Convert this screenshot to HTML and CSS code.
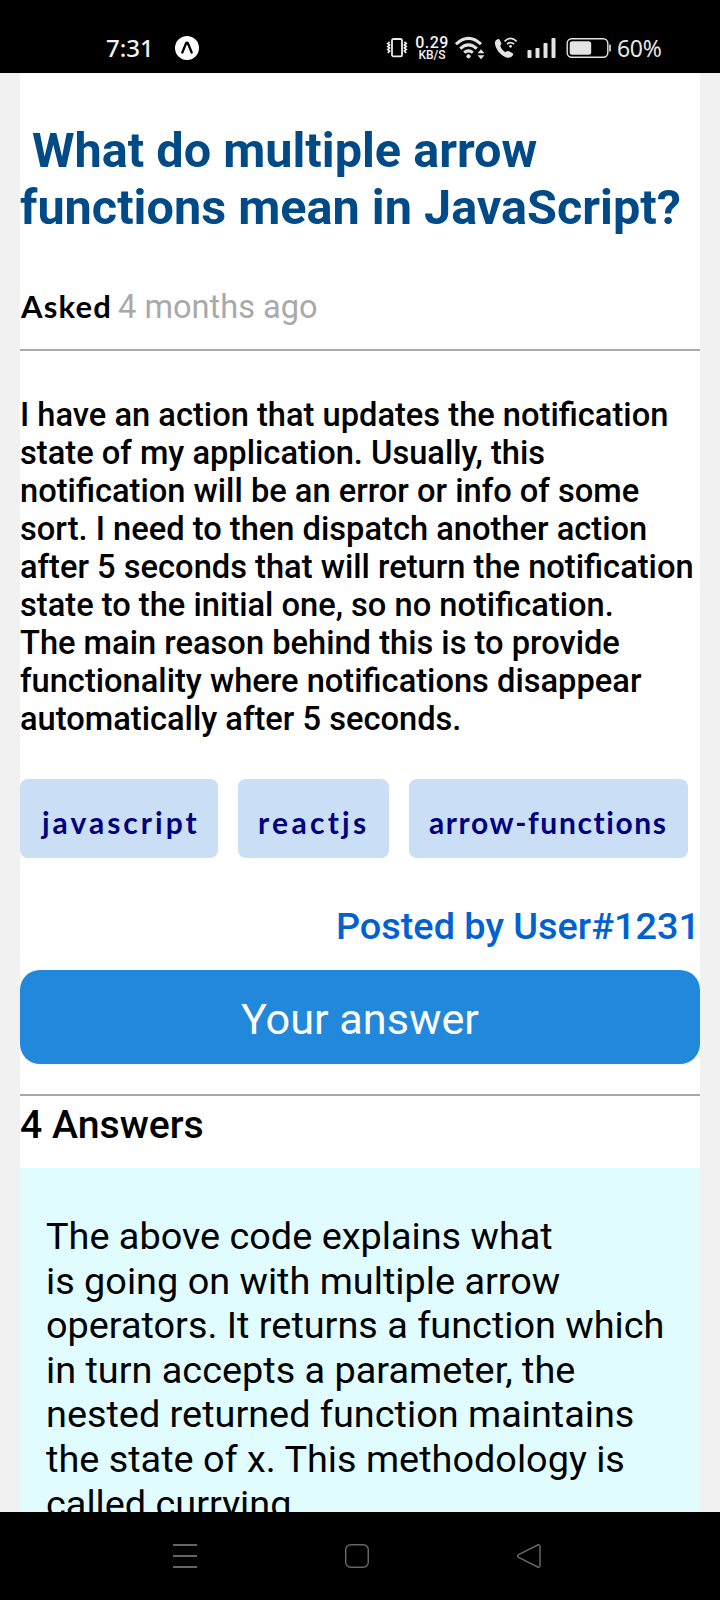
FILE: index.html
```html
<!DOCTYPE html>
<html lang="en">
<head>
<meta charset="utf-8">
<title>Question</title>
<link rel="stylesheet" href="styles.css">
</head>
<body>
<div class="screen">
  <header class="status">
    <div class="status-left">
      <span class="clock">7:31</span>
      <svg class="app-icon" width="24" height="24" viewBox="0 0 24 24"><circle cx="12" cy="12" r="12" fill="#fff"/><path d="M7.3 16.5 11 7.5Q12 6 13 7.5L16.7 16.5" fill="none" stroke="#000" stroke-width="2.3" stroke-linecap="round" stroke-linejoin="round"/></svg>
    </div>
    <div class="status-right">
      <svg class="vibrate" width="22" height="20" viewBox="0 0 22 20" fill="none" stroke="#eee"><rect x="6" y="1" width="10" height="17.400" rx="1.500" stroke-width="1.800"/><path d="M3.600 4 1.800 5.500 3.600 7 1.800 8.500 3.600 10 1.800 11.500 3.600 13 1.800 15M18.400 4 20.200 5.500 18.400 7 20.200 8.500 18.400 10 20.200 11.500 18.400 13 20.200 15" stroke-width="1.700"/></svg>
      <span class="net"><span class="net-rate">0.29</span><span class="net-unit">KB/S</span></span>
      <svg class="wifi" width="30" height="24" viewBox="0 0 30 24"><g fill="none" stroke="#e4e4e4" stroke-width="3.100"><path d="M1 8.200Q13.500-3.600 26 8.200"/><path d="M5.200 12.600Q13.500 5 21.800 12.600"/><path d="M9.200 16.600Q13.500 13 17.800 16.600"/></g><circle cx="13.500" cy="20.300" r="2.100" fill="#e4e4e4"/><path d="M22.500 17.300 26 13.300 29.500 17.300ZM22.500 19.300 29.500 19.300 26 23.300Z" fill="#e4e4e4"/></svg>
      <svg class="call" width="24" height="22" viewBox="0 0 24 22"><path d="M3.500 2.200Q5 1.500 5.800 3L7.300 6.300Q7.600 7.500 6.200 8.800Q7.500 13 11.600 15.200Q13 13.600 14.400 14L18.300 15.900Q19.800 16.800 18.700 18.400Q16.500 21.500 12.500 20.500Q7.500 18.900 4 14Q.5 8.500 1 5Q1.600 2.800 3.500 2.200Z" fill="#e4e4e4"/><g fill="none" stroke="#e4e4e4" stroke-width="1.700"><path d="M10.500 4.300Q16.500-1.400 22.700 4.300"/><path d="M13 7.200Q16.600 4 20.200 7.200"/></g><circle cx="16.600" cy="9.300" r="1.400" fill="#e4e4e4"/></svg>
      <svg class="bars" width="30" height="20" viewBox="0 0 30 20" fill="#e4e4e4"><rect x=".5" y="12" width="4" height="8" rx=".8"/><rect x="8.500" y="10" width="4" height="10" rx=".8"/><rect x="16.500" y="5" width="4" height="15" rx=".8"/><rect x="24.500" y="0" width="4" height="20" rx=".8"/></svg>
      <svg class="battery" width="46" height="20" viewBox="0 0 46 20"><rect x="1.200" y=".7" width="40.600" height="18.600" rx="4.500" fill="none" stroke="#e4e4e4" stroke-width="1.400"/><rect x="3.700" y="3.200" width="21.500" height="13.600" rx="2.500" fill="#e4e4e4"/><rect x="43" y="6.500" width="2" height="7" rx=".6" fill="#bbb"/></svg>
      <span class="percent">60%</span>
    </div>
  </header>

  <main class="page">
    <h1 class="title">&nbsp;What do multiple arrow<br>functions mean in JavaScript?</h1>
    <p class="asked"><span class="asked-label">Asked</span><span class="asked-time">4 months ago</span></p>
    <p class="body">I have an action that updates the notification<br>state of my application. Usually, this<br>notification will be an error or info of some<br>sort. I need to then dispatch another action<br>after 5 seconds that will return the notification<br>state to the initial one, so no notification.<br>The main reason behind this is to provide<br>functionality where notifications disappear<br>automatically after 5 seconds.</p>
    <div class="tags">
      <span class="tag tag-js">javascript</span>
      <span class="tag tag-react">reactjs</span>
      <span class="tag tag-arrow">arrow-functions</span>
    </div>
    <p class="author">Posted by User#1231</p>
    <button class="answer-button">Your answer</button>
    <h2 class="count">4 Answers</h2>
    <article class="answer">The above code explains what<br>is going on with multiple arrow<br>operators. It returns a function which<br>in turn accepts a parameter, the<br>nested returned function maintains<br>the state of x. This methodology is<br>called currying</article>
  </main>

  <nav class="nav">
    <svg width="26" height="26" viewBox="0 0 26 26" stroke="#666" stroke-width="1.800"><path d="M1 2H25M1 13H25M1 24H25"/></svg>
    <svg width="26" height="26" viewBox="0 0 26 26" fill="none" stroke="#666" stroke-width="1.500"><rect x="1.700" y="1.700" width="22.600" height="22.600" rx="5"/></svg>
    <svg width="26" height="26" viewBox="0 0 26 26" fill="none" stroke="#666" stroke-width="1.500"><path d="M2.600 11.700 21.700 2Q24 1.300 24 3.500V22.500Q24 24.700 21.700 24L2.600 14.300Q.6 13 2.600 11.700Z"/></svg>
  </nav>
</div>
</body>
</html>
```
FILE: styles.css
```css
* { box-sizing: border-box; margin: 0; padding: 0; }
body { background: #f1f1f1; font-family: Roboto, sans-serif; color: #000; }
.screen { width: 720px; height: 1600px; display: flex; flex-direction: column; overflow: hidden; }
svg { display: block; flex: none; }

.status { flex: none; height: 73px; background: #000; color: #f2f2f2; display: flex; justify-content: space-between; padding: 24px 58px 0 106px; font-family: "Noto Sans", sans-serif; }
.status-left, .status-right { display: flex; align-items: center; height: 48px; }
.clock { width: 69px; font-size: 24px; line-height: 34px; font-weight: 500; }
.net { display: flex; flex-direction: column; align-items: center; width: 34px; margin: 0 6px 0 7px; font-family: Roboto, sans-serif; font-weight: 500; }
.net-rate { font-size: 16px; line-height: 14px; letter-spacing: .4px; }
.net-unit { font-size: 12px; line-height: 11px; }
.call { margin-left: 9px; }
.bars { margin-left: 9px; }
.battery { margin-left: 9px; }
.percent { width: 45px; margin-left: 5px; font-size: 23px; line-height: 34px; letter-spacing: -.3px; color: #e6e6e6; }

.page { flex: 1; min-height: 0; overflow: hidden; margin: 0 20px; background: #fff; }
.title { padding-top: 49px; font-size: 48.6px; line-height: 57px; font-weight: 700; color: #004b87; white-space: nowrap; }
.asked { display: flex; align-items: baseline; height: 115px; padding-top: 51px; font-size: 32.6px; line-height: 38px; border-bottom: 2px solid #ababab; white-space: nowrap; }
.asked-label { width: 98px; padding-left: 1px; font-family: Lato, sans-serif; font-weight: 700; font-size: 31px; letter-spacing: 1.2px; }
.asked-time { color: #a9a9a9; }
.body { margin-top: 45px; font-size: 32.65px; line-height: 38px; font-weight: 500; white-space: nowrap; }
.tags { display: flex; gap: 20px; margin-top: 41px; }
.tag { height: 79px; padding: 22px 0 0 20px; border-radius: 8px; background: #cadef6; color: #000080; font-family: Lato, sans-serif; font-size: 30px; line-height: 42px; font-weight: 700; font-variant-ligatures: none; white-space: nowrap; }
.tag-js { width: 198px; padding-left: 22px; letter-spacing: 3px; }
.tag-react { width: 151px; letter-spacing: 3.3px; }
.tag-arrow { width: 279px; letter-spacing: 1.6px; }
.author { margin-top: 46px; height: 66px; font-size: 37.85px; line-height: 45px; font-weight: 500; color: #0062d2; text-align: right; white-space: nowrap; }
.answer-button { display: block; width: 100%; height: 94px; padding-top: 5px; border: 0; border-radius: 20px; background: #2188dc; color: #fff; font: 400 43.2px/52px Roboto, sans-serif; }
.count { margin-top: 30px; height: 74px; border-top: 2px solid #a9a9a9; padding-top: 7px; font-size: 39.2px; line-height: 45px; font-weight: 500; }
.answer { height: 500px; padding: 46px 26px; background: #e0fcff; font-size: 37.85px; line-height: 44.6px; white-space: nowrap; }

.nav { flex: none; height: 88px; background: #000; display: flex; justify-content: space-between; padding: 31px 178px 0 172px; }
```
